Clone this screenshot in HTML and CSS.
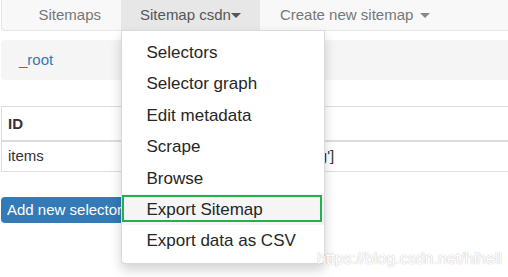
FILE: index.html
```html
<!DOCTYPE html>
<html lang="en">
<head>
  <meta charset="UTF-8">
  <title>Web Scraper - Sitemap csdn</title>
  <link rel="stylesheet" href="styles.css">
</head>
<body>
  <!-- Top navigation -->
  <nav class="navbar">
    <ul class="nav">
      <li><a href="#">Sitemaps</a></li>
      <li class="open">
        <a href="#" class="active">Sitemap csdn<span class="caret"></span></a>
        <ul class="dropdown-menu">
          <li><a href="#">Selectors</a></li>
          <li><a href="#">Selector graph</a></li>
          <li><a href="#">Edit metadata</a></li>
          <li><a href="#">Scrape</a></li>
          <li><a href="#">Browse</a></li>
          <li class="hover"><a href="#">Export Sitemap</a><span class="mark"></span></li>
          <li><a href="#">Export data as CSV</a></li>
        </ul>
      </li>
      <li><a href="#">Create new sitemap <span class="caret light"></span></a></li>
    </ul>
  </nav>

  <div class="container">
    <!-- Breadcrumb -->
    <div class="breadcrumb"><a href="#">_root</a></div>

    <!-- Selector table -->
    <table class="selector-table">
      <colgroup>
        <col class="col-id">
        <col>
      </colgroup>
      <thead>
        <tr><th>ID</th><th></th></tr>
      </thead>
      <tbody>
        <tr><td>items</td><td class="selector">['_root', 'blog']</td></tr>
      </tbody>
    </table>

    <button class="btn-add">Add new selector</button>
  </div>

  <div class="watermark">https://blog.csdn.net/hihell</div>
</body>
</html>
```

FILE: styles.css
```css
body {
  margin: 0;
  font-family: "Liberation Sans", Arial, sans-serif;
  font-size: 15px;
  color: #333;
  background: #fff;
  overflow: hidden;
  position: relative;
  height: 277px;
}

a {
  text-decoration: none;
}

/* Navbar */
.navbar {
  margin-left: 1px;
  height: 30px;
  background-color: #f8f8f8;
  border-left: 1px solid #e7e7e7;
  border-bottom: 1px solid #e7e7e7;
  border-radius: 0 0 0 4px;
  padding-left: 17px;
}

.nav {
  display: flex;
  margin: 0;
  padding: 0;
  list-style: none;
}

.nav > li {
  position: relative;
}

.nav > li > a {
  display: block;
  padding: 0 19.5px;
  line-height: 30px;
  color: #777;
}

.nav > li > a.active {
  background-color: #e7e7e7;
  color: #555;
}

.caret {
  display: inline-block;
  width: 0;
  height: 0;
  vertical-align: middle;
  border-top: 5px solid #555;
  border-left: 5px solid transparent;
  border-right: 5px solid transparent;
  margin-top: -2px;
}

.caret.light {
  border-top-color: #888;
  margin-left: 2px;
}

/* Dropdown */
.dropdown-menu {
  position: absolute;
  top: 30px;
  left: 0;
  width: 202px;
  margin: 0;
  padding: 6px 0;
  list-style: none;
  background: #fff;
  border: 1px solid rgba(0, 0, 0, 0.15);
  border-radius: 0 0 4px 4px;
  box-shadow: 0 6px 12px rgba(0, 0, 0, 0.175);
  z-index: 10;
}

.dropdown-menu li {
  position: relative;
}

.dropdown-menu a {
  display: block;
  padding: 0 25px;
  font-size: 17px;
  line-height: 31.4px;
  color: #262626;
  white-space: nowrap;
}

.dropdown-menu li.hover {
  background-color: #f5f5f5;
}

/* green annotation box */
.mark {
  position: absolute;
  top: 1px;
  left: 0;
  right: 2px;
  height: 23px;
  border: 2px solid #22b14c;
  pointer-events: none;
}

/* Page content */
.container {
  padding-left: 1px;
}

.breadcrumb {
  margin-top: 9px;
  height: 40px;
  line-height: 40px;
  padding-left: 18px;
  background-color: #f5f5f5;
  border-radius: 4px 0 0 4px;
}

.breadcrumb a {
  color: #337ab7;
}

.selector-table {
  margin-top: 26px;
  width: 100%;
  table-layout: fixed;
  border-collapse: collapse;
  border: 1px solid #ddd;
  border-right: none;
}

.col-id {
  width: 236px;
}

.selector-table th {
  text-align: left;
  font-weight: bold;
  padding: 8px 6px;
  line-height: 17px;
  border-bottom: 2px solid #ddd;
}

.selector-table td {
  padding: 5px 6px 7px;
  line-height: 17px;
  border-bottom: 1px solid #ddd;
}

.btn-add {
  display: block;
  margin-top: 25px;
  padding: 4px 6px;
  font-family: inherit;
  font-size: 15px;
  line-height: 18px;
  color: #fff;
  background-color: #337ab7;
  border: none;
  border-radius: 4px;
  cursor: pointer;
}

/* Watermark */
.watermark {
  position: absolute;
  top: 250px;
  left: 317px;
  font-size: 16px;
  line-height: 18px;
  color: #fff;
  text-shadow: 0 0 1px rgba(0, 0, 0, 0.25), 0 0 2px rgba(0, 0, 0, 0.1);
  z-index: 20;
  white-space: nowrap;
}
```
